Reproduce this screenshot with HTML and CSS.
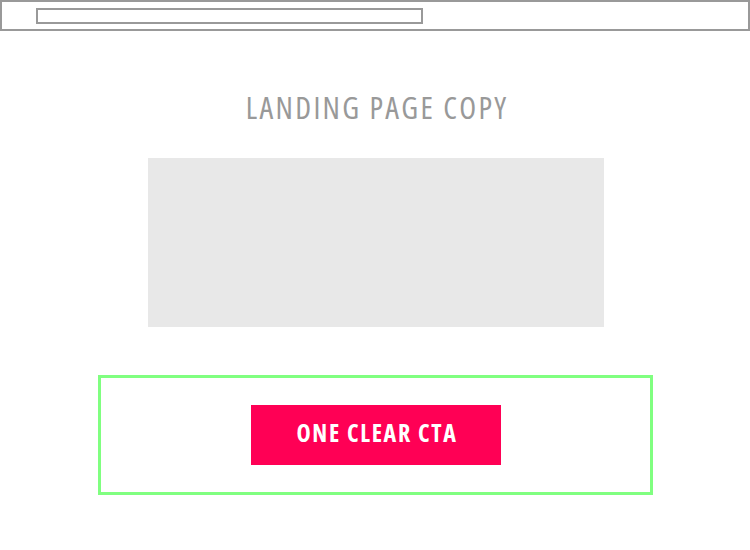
FILE: index.html
```html
<!DOCTYPE html>
<html lang="en">
<head>
    <meta charset="UTF-8">
    <meta name="viewport" content="width=device-width, initial-scale=1.0">
    <title>Landing Page Wireframe</title>
    <link rel="stylesheet" href="styles.css">
</head>
<body>
    <header class="browser-bar">
        <div class="address-bar"></div>
    </header>

    <main class="page">
        <h1 class="headline">LANDING PAGE COPY</h1>
        <div class="hero-image"></div>
        <section class="cta-zone">
            <a href="#" class="cta-btn">ONE CLEAR CTA</a>
        </section>
    </main>
</body>
</html>
```

FILE: styles.css
```css
:root {
    --line: #999999;
    --placeholder: #e8e8e8;
    --green: #80ff80;
    --pink: #ff0055;
}

* {
    margin: 0;
    padding: 0;
    box-sizing: border-box;
}

body {
    background-color: white;
    font-family: "Open Sans", "Liberation Sans Narrow", sans-serif;
    font-stretch: condensed;
}

.browser-bar {
    height: 31px;
    border: 2px solid var(--line);
    padding: 6px 0 0 34px;
}

.address-bar {
    width: 387px;
    height: 16px;
    border: 2px solid var(--line);
}

.page {
    display: flex;
    flex-direction: column;
    align-items: center;
    padding-left: 2px;
}

.headline {
    margin-top: 58px;
    font-size: 31px;
    font-weight: 400;
    line-height: 36px;
    letter-spacing: 2.3px;
    text-indent: 2.3px;
    color: var(--line);
}

.hero-image {
    width: 456px;
    height: 169px;
    margin-top: 33px;
    background-color: var(--placeholder);
}

.cta-zone {
    width: 555px;
    height: 120px;
    margin-top: 48px;
    margin-left: -1px;
    border: 3px solid var(--green);
    display: flex;
    align-items: center;
    justify-content: center;
}

.cta-btn {
    display: flex;
    align-items: center;
    justify-content: center;
    width: 250px;
    height: 60px;
    margin-left: 1px;
    padding: 0 0 5px 2px;
    background-color: var(--pink);
    color: white;
    font-size: 24px;
    font-weight: 700;
    letter-spacing: 1.7px;
    text-decoration: none;
}
```
